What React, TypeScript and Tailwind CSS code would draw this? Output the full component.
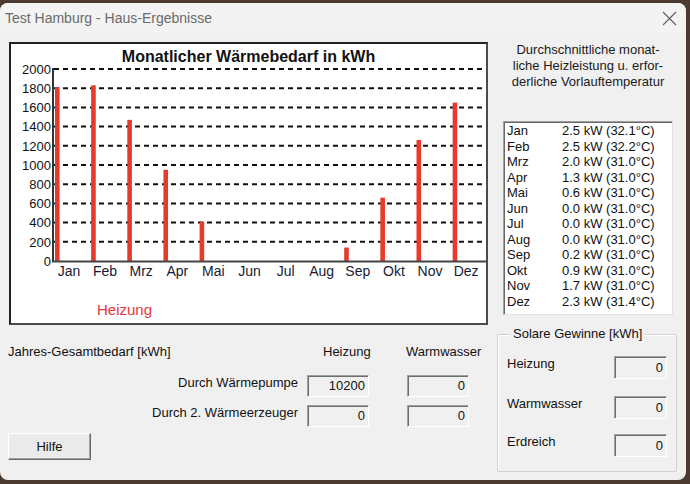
import React from "react";

const months = ["Jan","Feb","Mrz","Apr","Mai","Jun","Jul","Aug","Sep","Okt","Nov","Dez"];
const values = [1810,1830,1470,950,410,0,0,0,140,660,1260,1650];
const listRows: [string, string][] = [
  ["Jan","2.5 kW (32.1°C)"],["Feb","2.5 kW (32.2°C)"],["Mrz","2.0 kW (31.0°C)"],["Apr","1.3 kW (31.0°C)"],
  ["Mai","0.6 kW (31.0°C)"],["Jun","0.0 kW (31.0°C)"],["Jul","0.0 kW (31.0°C)"],["Aug","0.0 kW (31.0°C)"],
  ["Sep","0.2 kW (31.0°C)"],["Okt","0.9 kW (31.0°C)"],["Nov","1.7 kW (31.0°C)"],["Dez","2.3 kW (31.4°C)"],
];

function Chart() {
  const base = 261;
  const k = 0.096;
  return (
    <svg width="475" height="279" className="block">
      <g transform="translate(-11,-44)" fontFamily="'Liberation Sans', Arial, sans-serif">
        <text x="248.5" y="62" textAnchor="middle" fontSize="16" fontWeight="bold" fill="#111">Monatlicher Wärmebedarf in kWh</text>
        {Array.from({ length: 10 }).map((_, i) => {
          const y = 69 + 19.2 * i;
          return <line key={i} x1="54" x2="485" y1={y} y2={y} stroke="#111" strokeWidth="2" strokeDasharray="5 4" />;
        })}
        {Array.from({ length: 11 }).map((_, i) => {
          const y = 69 + 19.2 * i;
          return <text key={i} x="51" y={y + 4.7} textAnchor="end" fontSize="13" fill="#111">{2000 - i * 200}</text>;
        })}
        {values.map((v, i) => (
          v > 0 ? <rect key={i} x={55 + 36.15 * i} y={base - v * k} width="4.6" height={v * k} fill="#e63a2c" /> : null
        ))}
        <line x1="53" x2="53" y1="68" y2="262" stroke="#333" strokeWidth="2" />
        <line x1="52" x2="486" y1="261.5" y2="261.5" stroke="#444" strokeWidth="2" />
        {months.map((m, i) => (
          <text key={m} x={69 + 36.1 * i} y="276" textAnchor="middle" fontSize="14" fill="#1a1a33">{m}</text>
        ))}
        <text x="97" y="315" fontSize="15" fill="#e8363a">Heizung</text>
      </g>
    </svg>
  );
}

function Field({ value, w = "w-[62px]", h = "h-[22px]" }: { value: string; w?: string; h?: string }) {
  return (
    <div className={`${w} ${h} border border-t-[#a0a0a0] border-l-[#a0a0a0] border-r-white border-b-white shadow-[inset_1px_1px_0_#6d6d6d] bg-[#f0f0f0] flex items-center justify-end pr-[3px] text-[13px] text-[#111]`}>
      {value}
    </div>
  );
}

export default function App() {
  return (
    <div className="w-[690px] h-[484px] bg-[#4b3a30] pt-[3px] overflow-hidden font-['Liberation_Sans',Arial,sans-serif] text-[#111]">
      <div className="w-[686px] h-[477px] bg-[#f0f0f0] rounded-[8px] flex flex-col overflow-hidden">
        <div className="h-[30px] flex items-center justify-between pl-[5px] pr-[9px] bg-[#f3f3f3] shrink-0">
          <span className="text-[14px] text-[#6a6a6a]">Test Hamburg - Haus-Ergebnisse</span>
          <svg width="15" height="15" viewBox="0 0 15 15">
            <path d="M1 1 L14 14 M14 1 L1 14" stroke="#5f5f5f" strokeWidth="1.1" fill="none" />
          </svg>
        </div>
        <div className="flex flex-1">
          <div className="w-[490px] flex flex-col shrink-0">
            <div className="ml-[9px] mt-[9px] w-[479px] h-[283px] border-2 border-t-[#222] border-l-[#222] border-r-[#4a4a4a] border-b-[#4a4a4a] bg-white">
              <Chart />
            </div>
            <div className="mt-[19px] flex h-[16px] leading-[16px] text-[13px]">
              <span className="w-[323px] pl-[8px]">Jahres-Gesamtbedarf [kWh]</span>
              <span className="w-[83px]">Heizung</span>
              <span>Warmwasser</span>
            </div>
            <div className="mt-[15px] flex items-start text-[13px]">
              <span className="w-[298px] text-right leading-[16px]">Durch Wärmepumpe</span>
              <div className="ml-[9px]"><Field value="10200" /></div>
              <div className="ml-[38px]"><Field value="0" /></div>
            </div>
            <div className="mt-[8px] flex items-start text-[13px]">
              <span className="w-[298px] text-right leading-[16px]">Durch 2. Wärmeerzeuger</span>
              <div className="ml-[9px]"><Field value="0" /></div>
              <div className="ml-[38px]"><Field value="0" /></div>
            </div>
            <button className="ml-[8px] mt-[6px] w-[83px] h-[27px] border border-t-white border-l-white border-r-[#696969] border-b-[#696969] shadow-[inset_-1px_-1px_0_#a0a0a0] bg-[#ebebeb] text-[13px] text-[#111] flex items-center justify-center">
              Hilfe
            </button>
          </div>
          <div className="flex-1 flex flex-col">
            <div className="mt-[9px] text-center text-[13px] leading-[16px] text-[#1a1a1a]">
              <div>Durchschnittliche monat-</div>
              <div>liche Heizleistung u. erfor-</div>
              <div>derliche Vorlauftemperatur</div>
            </div>
            <div className="mt-[31px] ml-[13px] w-[170px] h-[194px] border border-t-[#a0a0a0] border-l-[#a0a0a0] border-r-[#e3e3e3] border-b-[#e3e3e3] shadow-[inset_1px_1px_0_#696969] bg-white pt-[1px] pl-[3px] text-[13px] leading-[15.5px] text-[#111]">
              {listRows.map(([m, v]) => (
                <div key={m} className="flex">
                  <span className="w-[55px]">{m}</span>
                  <span>{v}</span>
                </div>
              ))}
            </div>
            <div className="relative mt-[19px] ml-[7px] w-[180px] h-[138px] border border-[#d0d0d0] rounded-[2px] shadow-[inset_1px_1px_0_#fff]">
              <span className="absolute left-[12px] top-[-9px] bg-[#f0f0f0] px-[3px] text-[13px] leading-[16px]">Solare Gewinne [kWh]</span>
              <div className="mt-[21px] pl-[9px] flex items-start text-[13px]">
                <span className="w-[107px] leading-[16px]">Heizung</span>
                <Field value="0" w="w-[53px]" h="h-[23px]" />
              </div>
              <div className="mt-[17px] pl-[9px] flex items-start text-[13px]">
                <span className="w-[107px] leading-[16px]">Warmwasser</span>
                <Field value="0" w="w-[53px]" h="h-[23px]" />
              </div>
              <div className="mt-[15px] pl-[9px] flex items-start text-[13px]">
                <span className="w-[107px] leading-[16px]">Erdreich</span>
                <Field value="0" w="w-[53px]" h="h-[23px]" />
              </div>
            </div>
          </div>
        </div>
      </div>
    </div>
  );
}
